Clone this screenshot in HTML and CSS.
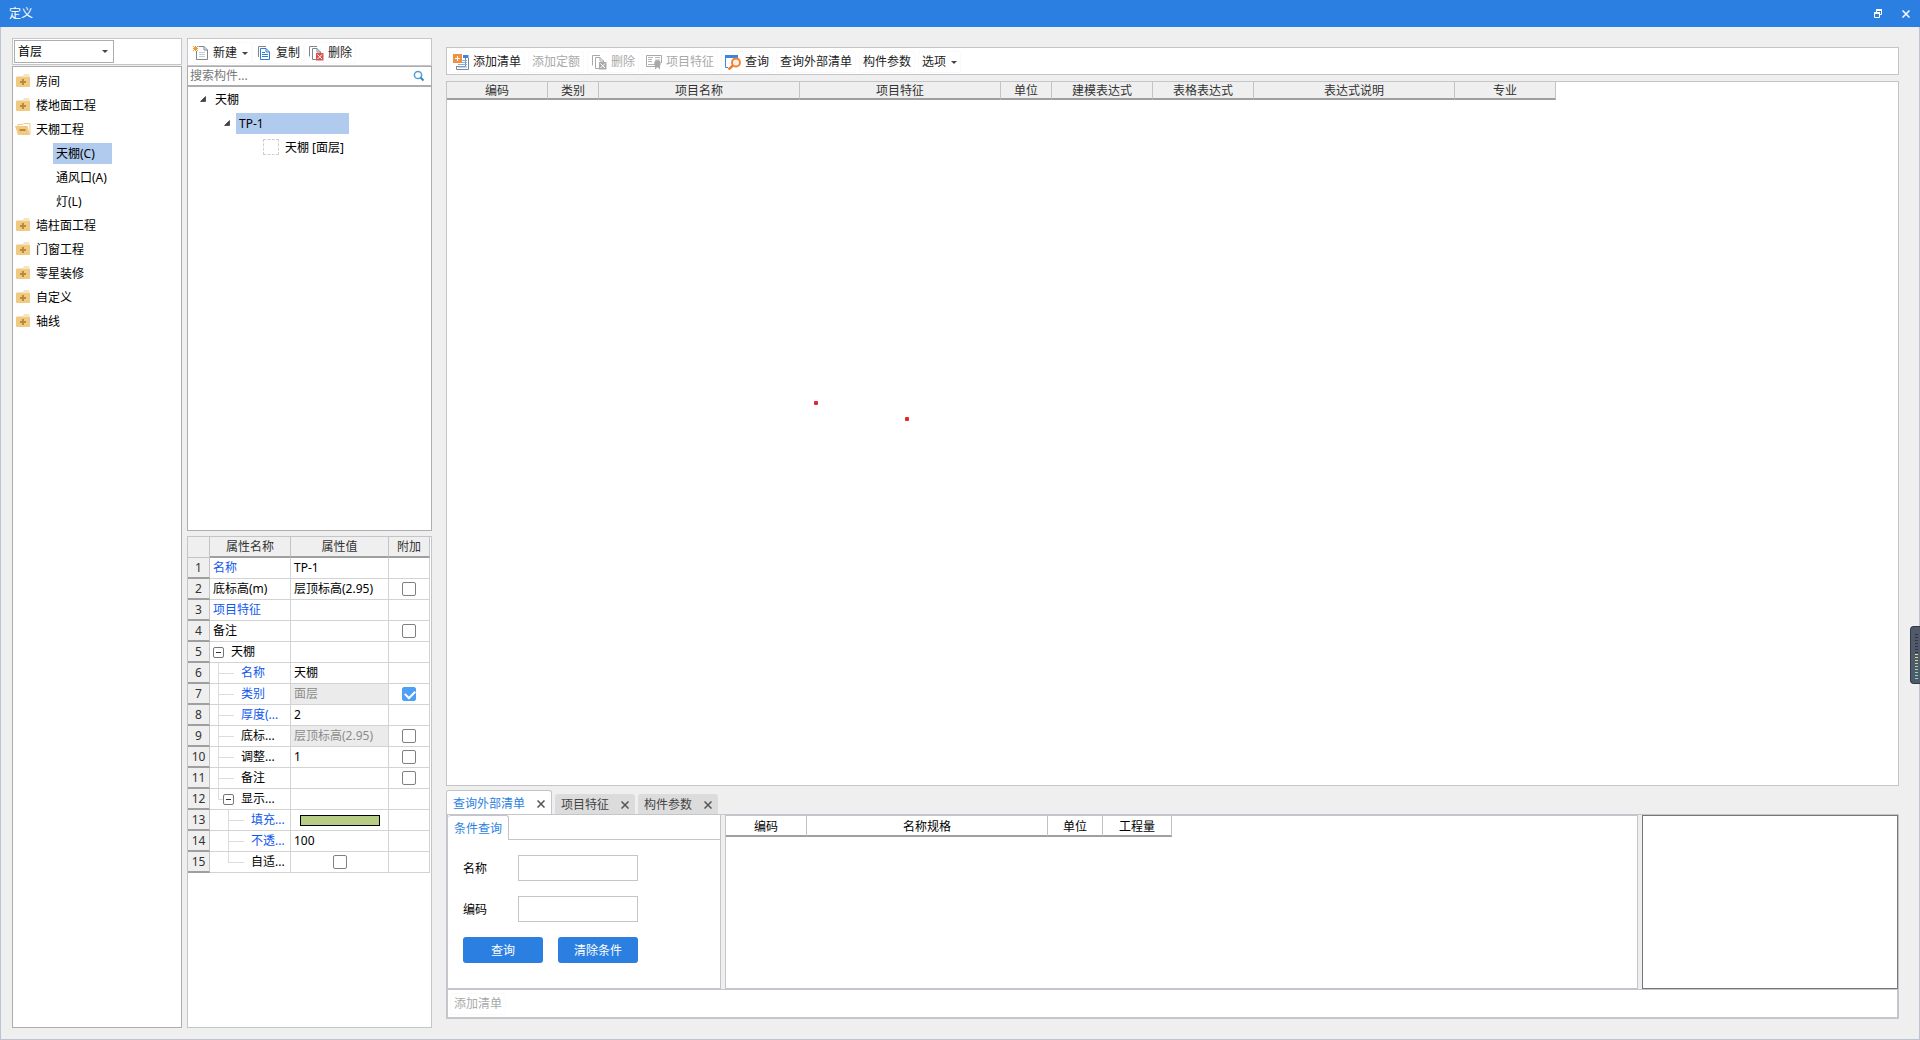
FILE: index.html
```html
<!DOCTYPE html>
<html lang="zh-CN">
<head>
<meta charset="utf-8">
<title>定义</title>
<link rel="stylesheet" href="styles.css">
</head>
<body>
<svg class="defs" aria-hidden="true">
  <symbol id="folder" viewBox="0 0 16 14">
    <path d="M8 1.5 9 .5h5.5v1H8z" fill="#f0c983"/>
    <path d="M1 3.5Q1 2.5 2 2.5h12q1 0 1 1v8.500q0 1-1 1H2q-1 0-1-1z" fill="#f0c983"/>
    <path d="M8 5v6M5 8h6" stroke="#bb8a35" stroke-width="2"/>
  </symbol>
  <symbol id="folder-open" viewBox="0 0 16 14">
    <path d="M3 4V2.500h5L9 1.500h6V12" fill="#fff" stroke="#f0c983"/>
    <path d="M0 4h12.500L15 13H3z" fill="#f0c983"/>
    <path d="M4.500 8h6" stroke="#bb8a35" stroke-width="2"/>
  </symbol>
  <symbol id="new" viewBox="0 0 16 16">
    <path d="M5.500 1.500H11L14.500 5v9.500h-11V6" fill="#fff" stroke="#7d8790"/>
    <path d="M11 1.500V5h3.500" fill="none" stroke="#7d8790"/>
    <path d="M6 7.500h6M6 9.500h6M6 11.500h6" stroke="#c6cbd0"/>
    <path d="M0 1h1v1H0zM2 1h1v1H2zM4 1h1v1H4zM1 2h3v3H1zM0 3h5v1H0zM0 5h1v1H0zM2 5h1v1H2zM4 5h1v1H4z" fill="#f19a2b"/>
  </symbol>
  <symbol id="copy" viewBox="0 0 16 16">
    <path d="M2.500 12V1.500H10" fill="none" stroke="#7d8790"/>
    <path d="M4.500 3.500H10L13.500 7v7.500h-9z" fill="#fff" stroke="#2d7bd6"/>
    <path d="M10 3.500V7h3.500M6 7.500h3M6 9.500h6M6 11.500h6" fill="none" stroke="#2d7bd6"/>
  </symbol>
  <symbol id="delete" viewBox="0 0 16 16">
    <path d="M1.500 11.500v-10H9" fill="none" stroke="currentColor"/>
    <path d="M8 14.500H4.500v-11H9L12.500 7v1M9 3.500V7h3.500" fill="none" stroke="currentColor"/>
    <path d="M8 8h7.500v7.500H8z" fill="var(--mark)"/>
    <path d="m9.500 9.500 4.500 4.500m0-4.500L9.500 14" stroke="#fff"/>
  </symbol>
  <symbol id="add-list" viewBox="0 0 16 16">
    <path d="M10 1h5.500v3H10z" fill="#3d86dc"/>
    <path d="M15.500 4v11.500h-12V12M12.500 4v8.500H3" fill="none" stroke="#7d8790"/>
    <path d="M9 6.500h5M9 8.500h5M5 10.500h9M5 13h9" stroke="#7fb0e6"/>
    <path d="M0 0h9v9H0z" fill="#ee9142"/>
    <path d="M4.500 2v5M2 4.500h5" stroke="#fff"/>
  </symbol>
  <symbol id="feature" viewBox="0 0 16 16">
    <path d="M10 12.500H.500v-11h15V9" fill="none" stroke="#a9a9a9"/>
    <path d="M2 3.500h5M2 5.500h4M2 7.500h4M2 10.500h7M9 3.500h5M9 6h5" stroke="#b5b5b5"/>
    <circle cx="11.500" cy="9.500" r="3.200" fill="#a9a9a9"/>
    <path d="M9 11h5v4.500L11.500 13 9 15.500z" fill="#a9a9a9"/>
  </symbol>
  <symbol id="query" viewBox="0 0 16 16">
    <path d="M0 1h13v3H0z" fill="#3d86dc"/>
    <path d="M.500 3v10.500H3" fill="none" stroke="#3d86dc"/>
    <circle cx="11" cy="8.500" r="4" fill="#fdeee0" stroke="#f07d2c" stroke-width="1.800"/>
    <path d="m8 11.500-4.500 4" stroke="#f07d2c" stroke-width="2.500"/>
  </symbol>
  <symbol id="search" viewBox="0 0 12 12">
    <circle cx="5" cy="5" r="3.600" fill="none" stroke="#4b9fd3" stroke-width="1.500"/>
    <path d="m7.500 7.500 3 3" stroke="#2b8ac4" stroke-width="2"/>
  </symbol>
  <symbol id="close" viewBox="0 0 8 8">
    <path d="m.500.500 7 7m0-7-7 7" stroke="currentColor" stroke-width="1.500"/>
  </symbol>
  <symbol id="restore" viewBox="0 0 8 9">
    <path d="M2.500 3V1H7.500v4.500H6M.500 4h5v4.500h-5z" fill="none" stroke="currentColor"/>
    <path d="M2 1h6M0 4h6" stroke="currentColor" stroke-width="2"/>
  </symbol>
  <symbol id="arrow" viewBox="0 0 6 6"><path d="M5.500.500v5h-5z" fill="#444" stroke="#222" stroke-width=".6"/></symbol>
</svg>

<header class="titlebar">
  <h1>定义</h1>
  <button aria-label="还原"><svg width="8" height="9"><use href="#restore"/></svg></button>
  <button aria-label="关闭"><svg width="8" height="8"><use href="#close"/></svg></button>
</header>

<main class="window">
  <section class="column">
    <div class="floor">
      <div class="select"><select aria-label="楼层"><option>首层</option></select></div>
    </div>
    <ul class="tree categories">
      <li><svg width="16" height="14"><use href="#folder"/></svg><span>房间</span></li>
      <li><svg width="16" height="14"><use href="#folder"/></svg><span>楼地面工程</span></li>
      <li><svg width="16" height="14"><use href="#folder-open"/></svg><span>天棚工程</span></li>
      <li class="child"><span class="selected">天棚(C)</span></li>
      <li class="child"><span>通风口(A)</span></li>
      <li class="child"><span>灯(L)</span></li>
      <li><svg width="16" height="14"><use href="#folder"/></svg><span>墙柱面工程</span></li>
      <li><svg width="16" height="14"><use href="#folder"/></svg><span>门窗工程</span></li>
      <li><svg width="16" height="14"><use href="#folder"/></svg><span>零星装修</span></li>
      <li><svg width="16" height="14"><use href="#folder"/></svg><span>自定义</span></li>
      <li><svg width="16" height="14"><use href="#folder"/></svg><span>轴线</span></li>
    </ul>
  </section>

  <section class="column">
    <div class="toolbar compact">
      <button class="tool"><svg width="16" height="16"><use href="#new"/></svg>新建<i class="caret"></i></button>
      <button class="tool"><svg width="16" height="16"><use href="#copy"/></svg>复制</button>
      <button class="tool"><svg width="16" height="16"><use href="#delete"/></svg>删除</button>
    </div>
    <div class="search">
      <input type="text" placeholder="搜索构件..." aria-label="搜索构件">
      <svg width="12" height="12"><use href="#search"/></svg>
    </div>
    <ul class="tree components">
      <li><svg width="6" height="6"><use href="#arrow"/></svg><span>天棚</span></li>
      <li class="level1"><svg width="6" height="6"><use href="#arrow"/></svg><span class="selected">TP-1</span></li>
      <li class="level2"><i class="placeholder"></i><span>天棚 [面层]</span></li>
    </ul>
    <div class="properties">
      <table>
        <colgroup><col class="p-num"><col class="p-name"><col class="p-value"><col class="p-add"></colgroup>
        <thead><tr><th></th><th>属性名称</th><th>属性值</th><th>附加</th></tr></thead>
        <tbody>
          <tr><th>1</th><td class="blue">名称</td><td>TP-1</td><td></td></tr>
          <tr><th>2</th><td>底标高(m)</td><td>层顶标高(2.95)</td><td class="check"><input type="checkbox" aria-label="附加 底标高(m)"></td></tr>
          <tr><th>3</th><td class="blue">项目特征</td><td></td><td></td></tr>
          <tr><th>4</th><td>备注</td><td></td><td class="check"><input type="checkbox" aria-label="附加 备注"></td></tr>
          <tr><th>5</th><td><div class="node"><i class="minus"></i>天棚</div></td><td></td><td></td></tr>
          <tr><th>6</th><td class="blue"><div class="node n1"><i class="line"></i>名称</div></td><td>天棚</td><td></td></tr>
          <tr><th>7</th><td class="blue"><div class="node n1"><i class="line"></i>类别</div></td><td class="locked">面层</td><td class="check"><input type="checkbox" checked aria-label="附加 类别"></td></tr>
          <tr><th>8</th><td class="blue"><div class="node n1"><i class="line"></i>厚度(...</div></td><td>2</td><td></td></tr>
          <tr><th>9</th><td><div class="node n1"><i class="line"></i>底标...</div></td><td class="locked">层顶标高(2.95)</td><td class="check"><input type="checkbox" aria-label="附加 底标高"></td></tr>
          <tr><th>10</th><td><div class="node n1"><i class="line"></i>调整...</div></td><td>1</td><td class="check"><input type="checkbox" aria-label="附加 调整"></td></tr>
          <tr><th>11</th><td><div class="node n1"><i class="line"></i>备注</div></td><td></td><td class="check"><input type="checkbox" aria-label="附加 备注"></td></tr>
          <tr><th>12</th><td><div class="node n1"><i class="line last stub"></i><i class="minus"></i>显示...</div></td><td></td><td></td></tr>
          <tr><th>13</th><td class="blue"><div class="node n2"><i class="line"></i>填充...</div></td><td class="check"><button class="swatch" aria-label="填充颜色"></button></td><td></td></tr>
          <tr><th>14</th><td class="blue"><div class="node n2"><i class="line"></i>不透...</div></td><td>100</td><td></td></tr>
          <tr><th>15</th><td><div class="node n2"><i class="line last"></i>自适...</div></td><td class="check"><input type="checkbox" aria-label="自适应"></td><td></td></tr>
        </tbody>
      </table>
    </div>
  </section>

  <section class="column work">
    <div class="toolbar">
      <button class="tool"><svg width="16" height="16"><use href="#add-list"/></svg>添加清单</button>
      <button class="tool" disabled>添加定额</button>
      <button class="tool" disabled><svg width="16" height="16"><use href="#delete"/></svg>删除</button>
      <button class="tool" disabled><svg width="16" height="16"><use href="#feature"/></svg>项目特征</button>
      <button class="tool"><svg width="16" height="16"><use href="#query"/></svg>查询</button>
      <button class="tool">查询外部清单</button>
      <button class="tool">构件参数</button>
      <button class="tool">选项<i class="caret"></i></button>
    </div>
    <div class="grid">
      <table class="list">
        <colgroup><col class="w101"><col class="w51"><col class="w201"><col class="w201"><col class="w51"><col class="w101"><col class="w101"><col class="w201"><col class="w101"></colgroup>
        <thead><tr><th>编码</th><th>类别</th><th>项目名称</th><th>项目特征</th><th>单位</th><th>建模表达式</th><th>表格表达式</th><th>表达式说明</th><th>专业</th></tr></thead>
      </table>
      <i class="dot first"></i>
      <i class="dot second"></i>
    </div>
    <nav class="tabs">
      <div class="tab active"><button>查询外部清单</button><button aria-label="关闭查询外部清单"><svg width="8" height="8"><use href="#close"/></svg></button></div>
      <div class="tab"><button>项目特征</button><button aria-label="关闭项目特征"><svg width="8" height="8"><use href="#close"/></svg></button></div>
      <div class="tab"><button>构件参数</button><button aria-label="关闭构件参数"><svg width="8" height="8"><use href="#close"/></svg></button></div>
    </nav>
    <div class="dock">
      <div class="panes">
        <div class="condition">
          <div class="subtabs"><button>条件查询</button></div>
          <form>
            <label for="name">名称</label><input id="name" type="text">
            <label for="code">编码</label><input id="code" type="text">
            <div class="actions"><button type="button">查询</button><button type="button">清除条件</button></div>
          </form>
        </div>
        <div class="results">
          <table class="list plain">
            <colgroup><col class="w81"><col class="w241"><col class="w55"><col class="w69"></colgroup>
            <thead><tr><th>编码</th><th>名称规格</th><th>单位</th><th>工程量</th></tr></thead>
          </table>
        </div>
        <div class="detail"></div>
      </div>
      <div class="footer"><button class="tool" disabled>添加清单</button></div>
    </div>
  </section>
</main>
<aside class="meter"><i class="idle"></i><i class="level"></i></aside>
</body>
</html>
```

FILE: styles.css
```css
* { box-sizing: border-box; }

body {
  margin: 0;
  min-height: 100vh;
  display: flex;
  flex-direction: column;
  background: #efefef;
  color: #000;
  font: 12px/20px "Noto Sans", "Noto Sans CJK SC", sans-serif;
}

button, input, select { font: inherit; color: inherit; margin: 0; padding: 0; }
button { border: 0; background: none; }
ul { list-style: none; margin: 0; padding: 0; }
svg { flex: none; display: block; }
.defs { position: absolute; width: 0; height: 0; }

/* Title bar */
.titlebar {
  display: flex;
  align-items: center;
  gap: 20px;
  height: 27px;
  padding: 0 10px 0 9px;
  background: #2b7fe1;
  color: #fff;
}
.titlebar h1 { flex: 1; margin: 0; font-size: 12px; font-weight: 400; }

.window {
  flex: 1;
  display: grid;
  grid-template-columns: 170px 245px minmax(0, 1fr);
  border: 1px solid #bcc4d2;
  border-top: 0;
  padding: 11px 20px 11px 11px;
  column-gap: 5px;
}
.column { display: flex; flex-direction: column; min-width: 0; }
.work { margin: 9px 0 9px 9px; }

/* Category column */
.floor {
  height: 27px;
  margin-bottom: 1px;
  padding: 1px;
  background: #fff;
  border: 1px solid #c3c5ca;
}
.select { position: relative; width: 100px; }
.select select {
  display: block;
  appearance: none;
  width: 100%;
  height: 23px;
  padding: 0 3px;
  border: 1px solid #adadad;
  border-radius: 0;
  background: #fff;
}
.select::after, .caret {
  content: "";
  border: 3px solid transparent;
  border-top-color: #444;
  border-bottom: 0;
}
.select::after { position: absolute; right: 6px; top: 10px; }
.caret { margin-left: 1px; }

.tree { background: #fff; border: 1px solid #adadad; }
.tree li { display: flex; align-items: center; height: 24px; }
.tree .selected { background: #b0cbed; }
.categories { flex: 1; padding: 2px; }
.categories li { gap: 5px; }
.categories span { line-height: 21px; }
.categories .child { padding-left: 38px; }
.categories .child span { padding: 0 3px; min-width: 59px; }

/* Toolbars */
.toolbar {
  display: flex;
  align-items: center;
  gap: 3px;
  height: 28px;
  margin-bottom: 6px;
  padding: 2px 2px 0;
  background: #fff;
  border: 1px solid #c3c5ca;
  color: #222;
}
.toolbar.compact { gap: 0; margin: 0; padding: 2px 1px 0; }
.tool {
  display: flex;
  align-items: center;
  gap: 4px;
  height: 22px;
  padding: 0 3px;
  border: 1px solid #fafafa;
  border-radius: 3px;
  white-space: nowrap;
}
.tool svg { color: #7d8790; --mark: #d9534f; }
.tool:disabled { color: #a9a9a9; }
.tool:disabled svg { color: #a9a9a9; --mark: #a9a9a9; }

/* Component column */
.search {
  display: flex;
  align-items: center;
  height: 20px;
  padding: 0 6px 0 2px;
  background: #fff;
  border: 1px solid #adadad;
}
.search input { flex: 1; min-width: 0; height: 18px; border: 0; background: none; }
.search input::placeholder { color: #777; opacity: 1; }
.components { height: 445px; }
.components li { gap: 6px; padding-left: 12px; }
.components li span { padding: 0 3px; line-height: 21px; }
.components .level1 { padding-left: 36px; }
.components .level2 { padding-left: 75px; gap: 3px; }
.components .selected { width: 113px; }
.placeholder { width: 16px; height: 16px; border: 1px dashed #cfcfcf; }

/* Property table */
.properties {
  flex: 1;
  margin-top: 5px;
  background: #fff;
  border: 1px solid #c3c5c8;
}
table { table-layout: fixed; border-collapse: separate; border-spacing: 0; }
th { font-weight: 400; padding: 0; }
.properties table { width: 242px; }
.p-num { width: 22px; }
.p-name { width: 81px; }
.p-value { width: 98px; }
.p-add { width: 41px; }
.properties th, .properties td {
  height: 21px;
  padding: 0 0 0 3px;
  line-height: 18px;
  white-space: nowrap;
  overflow: hidden;
  border-right: 1px solid #d3d3d3;
  border-bottom: 1px solid #d3d3d3;
}
.properties th {
  padding: 0;
  background: #efefef;
  color: #333;
  border-bottom: 2px solid #9f9f9f;
  border-right-color: #c3c3c3;
}
.properties thead th:first-child { border-bottom: 1px solid #c3c3c3; }
.properties .blue { color: #0f58f0; }
.properties .locked { background: #ebebeb; color: #8c8c8c; }
.properties .check { padding: 0; text-align: center; }
.node { display: flex; align-items: center; height: 20px; gap: 7px; }
.node.n1 { padding-left: 5px; }
.node.n2 { padding-left: 15px; }
.line {
  flex: none;
  width: 16px;
  height: 20px;
  background:
    linear-gradient(#dcdcdc, #dcdcdc) 0 10px / 16px 1px no-repeat,
    linear-gradient(#dcdcdc, #dcdcdc) 0 0 / 1px 20px no-repeat;
}
.line.last { background-size: 16px 1px, 1px 10px; }
.line.stub { width: 5px; margin-right: -7px; }
.minus {
  flex: none;
  width: 11px;
  height: 11px;
  border: 1px solid #777;
  border-radius: 2px;
  background: linear-gradient(#333, #333) 2px 4px / 5px 1px no-repeat;
}
input[type="checkbox"] {
  appearance: none;
  display: block;
  width: 14px;
  height: 14px;
  margin: 0 auto;
  border: 1px solid #808080;
  border-radius: 2px;
  background: #fff;
}
input[type="checkbox"]:checked { background: #4f9ff8; border-color: #4f9ff8; }
input[type="checkbox"]:checked::before {
  content: "";
  display: block;
  width: 8px;
  height: 5px;
  margin: 2px;
  border: solid #fff;
  border-width: 0 0 2px 2px;
  transform: rotate(-45deg);
}
.swatch {
  display: block;
  width: 80px;
  height: 11px;
  margin: 0 auto;
  border: 1px solid #000;
  background: #b7cd86;
}

/* Main list */
.grid {
  position: relative;
  flex: 1;
  min-height: 200px;
  background: #fff;
  border: 1px solid #c3c5c8;
}
.list { width: 1109px; font-family: "Noto Sans CJK SC", sans-serif; }
.list th {
  height: 18px;
  line-height: 16px;
  background: #efefef;
  color: #333;
  border-right: 1px solid #c3c3c3;
  border-bottom: 2px solid #9f9f9f;
}
.list.plain { width: 446px; }
.list.plain th { height: 21px; padding-top: 1px; line-height: 18px; background: #fff; color: #000; }
.w51 { width: 51px; }
.w55 { width: 55px; }
.w69 { width: 69px; }
.w81 { width: 81px; }
.w101 { width: 101px; }
.w201 { width: 201px; }
.w241 { width: 241px; }
.dot {
  position: absolute;
  width: 4px;
  height: 4px;
  border-radius: 1px;
  background: #e8262c;
}
.dot.first { left: 367px; top: 319px; }
.dot.second { left: 458px; top: 335px; }

/* Docked query panel */
.tabs { display: flex; align-items: flex-end; gap: 3px; height: 28px; }
.tab {
  display: flex;
  align-items: center;
  justify-content: space-between;
  width: 80px;
  height: 20px;
  padding: 2px 6px 0;
  border-radius: 3px 3px 0 0;
  background: #dcdcdc;
  color: #444;
}
.tab svg { color: #555; }
.tab.active {
  width: 106px;
  height: 24px;
  background: #fff;
  border: 1px solid #c3c5ca;
  border-bottom: 0;
  color: #2b7fe1;
}
.dock { border: 2px solid #c3c7cc; border-top-width: 1px; background: #fff; }
.panes {
  display: grid;
  grid-template-columns: 273px minmax(0, 1fr) 256px;
  gap: 4px;
  margin-right: -1px;
  background: #efefef;
}
.condition { background: #fff; border: 1px solid #c3c5ca; border-width: 0 1px 1px 0; }
.subtabs { display: flex; height: 25px; }
.subtabs::after { content: ""; flex: 1; border-bottom: 1px solid #c3c5ca; }
.subtabs button {
  width: 61px;
  padding-top: 2px;
  border: 1px solid #c3c5ca;
  border-width: 1px 1px 0 0;
  border-radius: 3px 3px 0 0;
  color: #2b7fe1;
}
form {
  display: grid;
  grid-template-columns: 40px 120px;
  gap: 15px;
  align-items: center;
  padding: 15px 15px 25px;
}
form label { padding-top: 2px; }
form input { height: 26px; border: 1px solid #c3c5ca; background: #fff; }
.actions { grid-column: 1 / -1; display: flex; gap: 15px; }
.actions button {
  width: 80px;
  height: 26px;
  padding-top: 2px;
  border-radius: 3px;
  background: #2b7fe1;
  color: #fff;
}
.results { background: #fff; border: 1px solid #c3c5ca; }
.detail { background: #fff; border: 1px solid #77777a; }
.footer {
  display: flex;
  align-items: center;
  height: 28px;
  padding: 0 2px;
  border-top: 1px solid #c3c7cc;
}

/* Meter docked to the window edge */
.meter {
  position: fixed;
  right: 0;
  top: 626px;
  width: 10px;
  height: 58px;
  padding: 7px 2px 6px 4px;
  border: 1px solid #343a45;
  border-right: 0;
  border-radius: 4px 0 0 4px;
  background: #505a6b;
}
.meter i { display: block; }
.idle { height: 20px; background: repeating-linear-gradient(#2e343e 0 1px, transparent 1px 3px); }
.level {
  height: 26px;
  background:
    repeating-linear-gradient(transparent 0 1px, #505a6b 1px 3px),
    linear-gradient(#e6e46a, #9ddf9c 50%, #63e0d8);
}
```
